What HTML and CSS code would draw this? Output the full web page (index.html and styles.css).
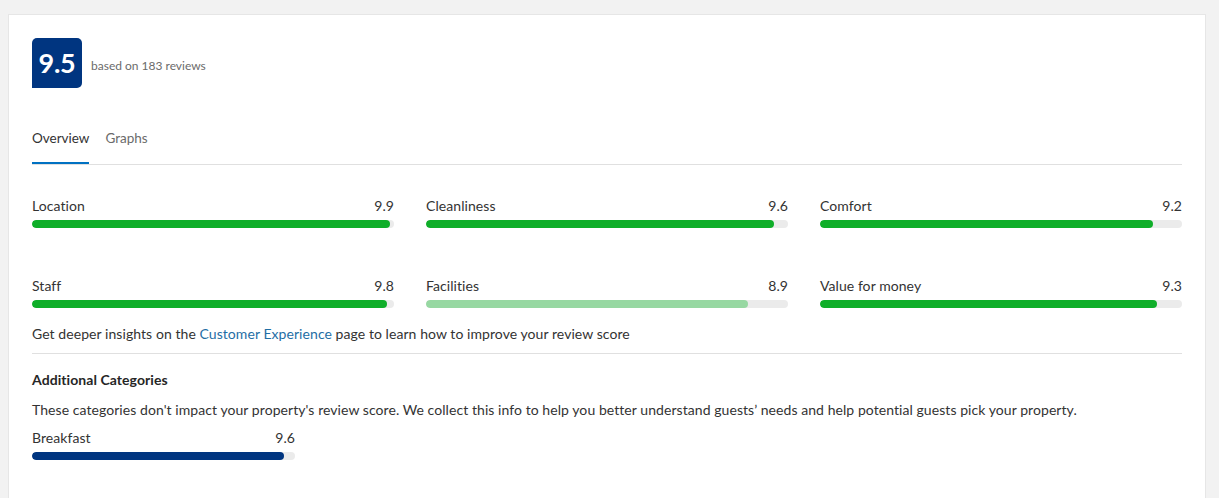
FILE: index.html
```html
<!DOCTYPE html>
<html lang="en">
<head>
  <meta charset="UTF-8">
  <title>Guest reviews</title>
  <link rel="stylesheet" href="styles.css">
</head>
<body>
  <div class="card">
    <div class="score-head">
      <div class="score-badge">9.5</div>
      <div class="score-count">based on 183 reviews</div>
    </div>

    <div class="tabs">
      <a class="tab active">Overview</a>
      <a class="tab">Graphs</a>
    </div>

    <div class="ratings">
      <div class="rating">
        <div class="rating-top"><span>Location</span><span>9.9</span></div>
        <div class="track"><div class="fill" style="width: 99%"></div></div>
      </div>
      <div class="rating">
        <div class="rating-top"><span>Cleanliness</span><span>9.6</span></div>
        <div class="track"><div class="fill" style="width: 96%"></div></div>
      </div>
      <div class="rating">
        <div class="rating-top"><span>Comfort</span><span>9.2</span></div>
        <div class="track"><div class="fill" style="width: 92%"></div></div>
      </div>
      <div class="rating">
        <div class="rating-top"><span>Staff</span><span>9.8</span></div>
        <div class="track"><div class="fill" style="width: 98%"></div></div>
      </div>
      <div class="rating">
        <div class="rating-top"><span>Facilities</span><span>8.9</span></div>
        <div class="track"><div class="fill light" style="width: 89%"></div></div>
      </div>
      <div class="rating">
        <div class="rating-top"><span>Value for money</span><span>9.3</span></div>
        <div class="track"><div class="fill" style="width: 93%"></div></div>
      </div>
    </div>

    <p class="insights">Get deeper insights on the <a class="link">Customer Experience</a> page to learn how to improve your review score</p>

    <div class="additional">
      <h3>Additional Categories</h3>
      <p class="note">These categories don't impact your property's review score. We collect this info to help you better understand guests’ needs and help potential guests pick your property.</p>
      <div class="rating small">
        <div class="rating-top"><span>Breakfast</span><span>9.6</span></div>
        <div class="track"><div class="fill blue" style="width: 96%"></div></div>
      </div>
    </div>
  </div>
</body>
</html>
```

FILE: styles.css
```css
* {
  box-sizing: border-box;
}

html, body {
  margin: 0;
  padding: 0;
  height: 100%;
  overflow: hidden;
}

body {
  background: #f2f2f2;
  padding: 14px 13px 0 8px;
  font-family: "Lato", "Noto Sans", sans-serif;
  font-size: 14px;
  line-height: 20px;
  letter-spacing: 0.065px;
  color: #333;
}

.card {
  background: #fff;
  border: 1px solid #e6e6e6;
  border-bottom: none;
  padding: 23px 23px 40px;
  min-height: 100%;
}

.score-head {
  display: flex;
  align-items: center;
  gap: 9px;
}

.score-badge {
  width: 50px;
  height: 50px;
  background: #003580;
  color: #fff;
  border-radius: 5px 5px 5px 0;
  font-size: 27px;
  font-weight: 700;
  display: flex;
  align-items: center;
  justify-content: center;
  letter-spacing: -0.3px;
}

.score-count {
  font-size: 12px;
  color: #6b6b6b;
  letter-spacing: 0;
  padding-top: 6px;
}

.tabs {
  display: flex;
  gap: 16px;
  margin-top: 26px;
  border-bottom: 1px solid #e0e0e0;
}

.tab {
  padding: 14px 0 14px;
  border-bottom: 2px solid transparent;
  font-size: 13.5px;
  letter-spacing: 0;
  color: #6b6b6b;
  cursor: pointer;
}

.tab.active {
  color: #333;
  border-bottom-color: #0071c2;
}

.ratings {
  display: grid;
  grid-template-columns: repeat(3, 1fr);
  column-gap: 32px;
  row-gap: 48px;
  margin-top: 31px;
}

.rating-top {
  display: flex;
  justify-content: space-between;
}

.track {
  height: 8px;
  margin-top: 4px;
  background: #ebebeb;
  border-radius: 4px;
  overflow: hidden;
}

.fill {
  height: 100%;
  background: #0fae29;
  border-radius: 4px;
}

.fill.light {
  background: #97d8a2;
}

.fill.blue {
  background: #003580;
}

.insights {
  margin: 16px 0 0;
  padding-bottom: 9px;
  border-bottom: 1px solid #e0e0e0;
}

.link {
  color: #1f6ea5;
  cursor: pointer;
}

.additional h3 {
  margin: 16px 0 0;
  font-size: 14px;
  line-height: 20px;
  font-weight: 700;
  color: #262626;
}

.note {
  margin: 10px 0 0;
}

.rating.small {
  width: 263px;
  margin-top: 8px;
}
```
